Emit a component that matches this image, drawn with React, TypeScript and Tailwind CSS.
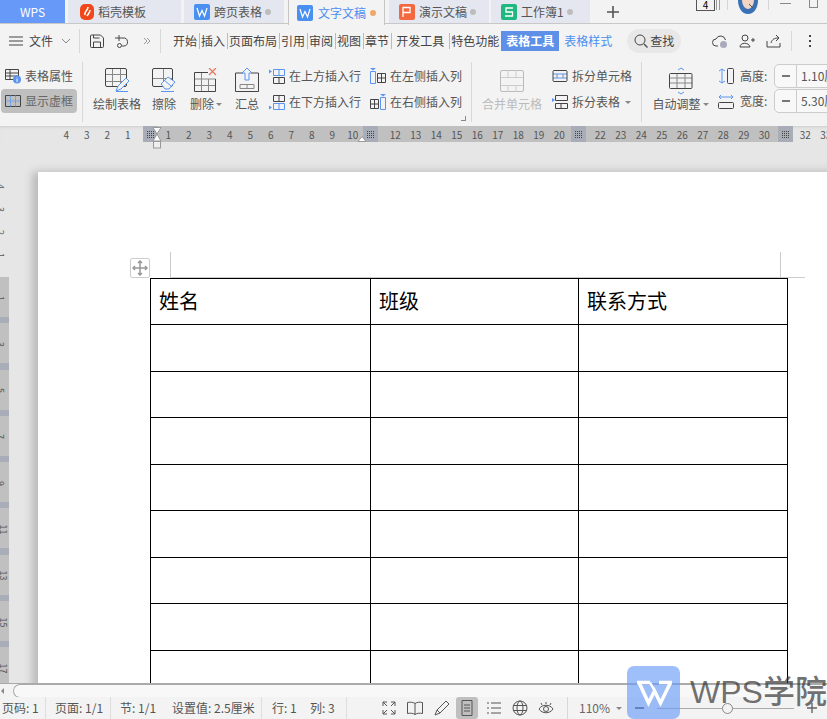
import React from "react";

const S = ({ w, h, children, className = "" }: { w: number; h: number; children: React.ReactNode; className?: string }) => (
  <svg width={w} height={h} viewBox={`0 0 ${w} ${h}`} fill="none" className={`flex-none ${className}`}>
    {children}
  </svg>
);
const D = "#444";
const L = "#888";
const B = "#5b95f0";

const TabIcon = ({ c, kind }: { c: string; kind: string }) => (
  <S w={kind === "F" ? 14 : 16} h={16}>
    <rect width={kind === "F" ? 14 : 16} height="16" rx={kind === "F" ? 5 : 2} fill={c} />
    {kind === "W" && <path d="M3 4 L5.5 12 L8 6.5 L10.5 12 L13 4" stroke="#fff" strokeWidth="1.2" />}
    {kind === "P" && <path d="M4 13V3.5h7v5H4" stroke="#fff" strokeWidth="1.3" />}
    {kind === "S" && <path d="M12 4H5v4h6.5v4H4" stroke="#fff" strokeWidth="1.3" />}
    {kind === "F" && <path d="M8 3c0 4-4 4-3 8M10 6c0 3-2 4-3 6" stroke="#fff" strokeWidth="1.5" />}
  </S>
);

const Tab = ({ w, icon, label, dot, active, ml, pl = "pl-[10px]" }: { w: string; icon: React.ReactNode; label: string; dot?: string; active?: boolean; ml: string; pl?: string }) => (
  <div
    className={`${w} ${ml} ${pl} flex flex-none items-center text-[12px] ${
      active ? "relative z-10 h-[25px] gap-[5px] border-x border-[#c6c6c6] bg-[#f3f3f3] text-[#4a8ef0]" : "h-[23px] gap-[4px] bg-[#e4e7ef] text-[#555]"
    }`}
  >
    {icon}
    <span className="whitespace-nowrap">{label}</span>
    {dot && <span className="ml-[-1px] h-[6px] w-[6px] rounded-full" style={{ background: dot }} />}
  </div>
);

const TabBar = () => (
  <div className="flex h-[24px] flex-none border-b border-[#c8c8c8] bg-[#f3f3f3]">
    <div className="flex h-full w-[65px] flex-none items-center justify-center bg-[#6699f8] text-[12px] text-white">WPS</div>
    <Tab ml="ml-[3px]" pl="pl-[12px]" w="w-[113px]" icon={<TabIcon c="#f0481a" kind="F" />} label="稻壳模板" />
    <Tab ml="ml-[3px]" w="w-[100px]" icon={<TabIcon c="#4a90f0" kind="W" />} label="跨页表格" dot="#bdbdbd" />
    <Tab ml="ml-[4px]" pl="pl-[8px]" w="w-[97px]" icon={<TabIcon c="#4a90f0" kind="W" />} label="文字文稿" dot="#efa868" active />
    <Tab ml="ml-[4px]" w="w-[100px]" icon={<TabIcon c="#f4683f" kind="P" />} label="演示文稿" dot="#bdbdbd" />
    <Tab ml="ml-[2px]" w="w-[99px]" icon={<TabIcon c="#20b880" kind="S" />} label="工作簿1" dot="#bdbdbd" />
    <div className="ml-[16px] flex-none">
      <S w={14} h={23}>
        <path d="M7 6v12M1 12h12" stroke="#555" strokeWidth="1.6" />
      </S>
    </div>
    <div className="ml-[76px] flex h-[11px] w-[19px] flex-none items-end justify-center border border-t-0 border-[#555] text-[10px] leading-none text-black">4</div>
    <div className="ml-[1px] h-[10px] w-[4px] flex-none border-x border-[#999]" />
    <div className="ml-[7px] h-[10px] w-px flex-none bg-[#d5d5d5]" />
    <div className="ml-[10px] h-[14px] w-[20px] flex-none">
      <S w={20} h={14}>
        <path d="M0 0h20c0 8-4 14-10 14S0 8 0 0z" fill="#3a70b5" />
        <path d="M4 0h12c0 5-3 9-6 9S4 5 4 0z" fill="#f0d5c5" />
        <path d="M11 4l4 4" stroke="#555" />
      </S>
    </div>
    <div className="ml-[10px] h-[10px] w-px flex-none bg-[#d5d5d5]" />
    <div className="ml-[11px] mt-[3px] h-px w-[11px] flex-none bg-[#888]" />
    <div className="ml-[18px] h-[8px] w-[9px] flex-none border border-t-0 border-[#888]" />
  </div>
);

const Sep = ({ className = "" }: { className?: string }) => <div className={`w-px flex-none bg-[#d8d8d8] ${className}`} />;

const MenuItem = ({ t }: { t: string }) => <span className="flex-none whitespace-nowrap text-[12px] text-[#444]">{t}</span>;
const MenuLine = ({ className }: { className: string }) => <div className={`h-[16px] w-px flex-none bg-[#bbb] ${className}`} />;

const MenuBar = () => (
  <div className="flex h-[34px] flex-none items-center bg-[#f3f3f3]">
    <S w={14} h={12} className="ml-[9px]">
      <path d="M0 2h14M0 6h14M0 10h14" stroke={D} />
    </S>
    <span className="ml-[6px] flex-none text-[12px] text-[#444]">文件</span>
    <S w={10} h={6} className="ml-[8px]">
      <path d="M1 1l4 4 4-4" stroke="#888" />
    </S>
    <Sep className="ml-[8px] h-[24px]" />
    <S w={14} h={14} className="ml-[10px]">
      <path d="M1.5 1h9l3 3v8.5a1 1 0 0 1-1 1h-11a1 1 0 0 1-1-1V2a1 1 0 0 1 1-1zM3.5 13.5V8h7v5.5M3.5 1v3h6" stroke={D} />
    </S>
    <S w={14} h={14} className="ml-[11px]">
      <path d="M0 4h8a4 4 0 0 1 1 8H7M4 1v6" stroke={D} />
      <circle cx="4.5" cy="11.5" r="2" stroke={D} />
    </S>
    <S w={8} h={8} className="ml-[14px]">
      <path d="M1 1l3 3-3 3M4 1l3 3-3 3" stroke="#999" />
    </S>
    <Sep className="ml-[9px] h-[24px]" />
    <div className="ml-[12px] flex flex-none items-center">
      <MenuItem t="开始" />
      <MenuLine className="ml-[2px] mr-[1px]" />
      <MenuItem t="插入" />
      <MenuLine className="ml-[2px] mr-[1px]" />
      <MenuItem t="页面布局" />
      <MenuLine className="ml-[2px] mr-[1px]" />
      <MenuItem t="引用" />
      <MenuLine className="ml-[2px] mr-[1px]" />
      <MenuItem t="审阅" />
      <MenuLine className="ml-[2px] mr-[1px]" />
      <MenuItem t="视图" />
      <MenuLine className="ml-[2px] mr-[1px]" />
      <MenuItem t="章节" />
      <MenuLine className="ml-[2px] mr-[4px]" />
      <MenuItem t="开发工具" />
      <MenuLine className="ml-[5px] mr-[1px]" />
      <MenuItem t="特色功能" />
    </div>
    <div className="ml-[2px] flex h-[20px] w-[58px] flex-none items-center justify-center bg-[#5e90e8] text-[12px] font-bold text-white">表格工具</div>
    <span className="ml-[5px] flex-none text-[12px] text-[#4a8ef0]">表格样式</span>
    <div className="ml-[15px] flex h-[24px] w-[54px] flex-none items-center justify-center gap-[2px] rounded-full bg-[#e8e8e8] text-[12px] text-[#444]">
      <S w={14} h={14}>
        <circle cx="6" cy="6" r="5" stroke={D} />
        <path d="M10 10l3.5 3.5" stroke={D} strokeWidth="1.3" />
      </S>
      查找
    </div>
    <S w={16} h={14} className="ml-[31px]">
      <path d="M6 12H4a3.5 3.5 0 0 1 0-7 5 5 0 0 1 9.5 1" stroke={D} />
      <circle cx="11.5" cy="10.5" r="3.5" fill="#aab" />
    </S>
    <S w={16} h={14} className="ml-[11px]">
      <circle cx="6" cy="4" r="3" stroke={D} />
      <path d="M1 13c0-5 9-5 10 0zM12 6h4M14 4v4" stroke={D} />
    </S>
    <S w={16} h={14} className="ml-[11px]">
      <path d="M1 7v6h13V9M5 9c1-4 4-5 7-5M10 1l3 3-3 3" stroke={D} />
    </S>
    <Sep className="ml-[9px] h-[20px]" />
    <div className="ml-[17px] flex flex-none flex-col gap-[3px]">
      <div className="h-[2px] w-[2px] bg-[#444]" />
      <div className="h-[2px] w-[2px] bg-[#444]" />
      <div className="h-[2px] w-[2px] bg-[#444]" />
    </div>
  </div>
);

const Grid = ({ w = 22, h = 20, v = [0.5], hz = [0.5], c = D, inner = L }: { w?: number; h?: number; v?: number[]; hz?: number[]; c?: string; inner?: string }) => (
  <g>
    {v.map((f) => (
      <path key={f} stroke={inner} d={`M${Math.round(w * f) + 0.5} 0v${h}`} />
    ))}
    {hz.map((f) => (
      <path key={f} stroke={inner} d={`M0 ${Math.round(h * f) + 0.5}h${w}`} />
    ))}
    <rect x=".5" y=".5" width={w - 1} height={h - 1} rx="1.5" stroke={c} />
  </g>
);

const Big = ({ icon, label, ml, w, caret, muted }: { icon: React.ReactNode; label: string; ml: string; w: string; caret?: boolean; muted?: boolean }) => (
  <div className={`${ml} ${w} flex flex-none flex-col items-center`}>
    <div className="flex h-[34px] items-end">{icon}</div>
    <div className={`mt-[3px] flex items-center whitespace-nowrap text-[12px] leading-[18px] ${muted ? "text-[#bbb]" : "text-[#555]"}`}>
      {label}
      {caret && <span className="ml-[2px] mt-[1px] h-0 w-0 border-x-[3px] border-t-[3px] border-x-transparent border-t-[#888]" />}
    </div>
  </div>
);

const Mini = ({ icon, label, caret }: { icon: React.ReactNode; label: string; caret?: boolean }) => (
  <div className="flex h-[26px] items-center gap-[4px] whitespace-nowrap text-[12px] text-[#555]">
    {icon}
    {label}
    {caret && <span className="ml-[1px] mt-[1px] h-0 w-0 border-x-[3px] border-t-[3px] border-x-transparent border-t-[#888]" />}
  </div>
);

const RowIns = ({ below }: { below?: boolean }) => (
  <S w={16} h={15}>
    <path d={below ? "M0 10.5l3 2-3 2z" : "M0 .5l3 2-3 2z"} fill={B} />
    <path d="M4.5 .5h11v6h-11zM10 .5v6" stroke={below ? D : B} />
    <path d="M4.5 8.5h11v6h-11zM10 8.5v6" stroke={below ? B : D} />
  </S>
);
const ColIns = ({ right }: { right?: boolean }) => (
  <S w={16} h={16}>
    <path d={right ? "M10 0h6l-3 2.5z" : "M0 0h6L3 2.5z"} fill={B} />
    <path d={right ? "M10.5 3.5h5v12h-5z" : "M.5 3.5h5v12h-5z"} stroke={B} />
    <path d={right ? "M.5 5.5h8v9h-8zM4.5 5.5v9M.5 10h8" : "M7.5 5.5h8v9h-8zM11.5 5.5v9M7.5 10h8"} stroke={D} />
  </S>
);

const Stepper = ({ v }: { v: string }) => (
  <div className="ml-[1px] flex h-[24px] w-[60px] flex-none overflow-hidden rounded-l-[5px] border border-[#ccc] bg-[#f8f8f8] text-[12px] text-[#555]">
    <div className="flex w-[22px] flex-none items-center justify-center border-r border-[#ccc]">
      <div className="h-[2px] w-[8px] bg-[#777]" />
    </div>
    <span className="ml-[4px] whitespace-nowrap leading-[22px]">{v}</span>
  </div>
);

const Ribbon = () => (
  <div className="flex h-[68px] flex-none overflow-hidden bg-[#f3f3f3]">
    <div className="flex w-[82px] flex-none flex-col pl-[1px] pt-[5px]">
      <div className="flex h-[26px] items-center gap-[4px] pl-[4px] text-[12px] text-[#555]">
        <S w={16} h={16}>
          <path d="M.5 1.5h13v10H.5zM.5 5h13M5 1.5v10M.5 8h13" stroke={D} />
          <circle cx="12" cy="11.5" r="4" fill={B} />
          <path d="M12 9.5v.8M12 11v3" stroke="#fff" />
        </S>
        表格属性
      </div>
      <div className="flex h-[24px] w-[76px] items-center gap-[4px] rounded-[4px] bg-[#bfbfbf] pl-[4px] text-[12px] text-[#666]">
        <S w={16} h={14}>
          <path d="M.5 1.5h15v11H.5z" stroke={D} />
          <path d="M.5 7h15M5.5 1.5v11M10.5 1.5v11" stroke={B} strokeDasharray="2 1" />
        </S>
        显示虚框
      </div>
    </div>
    <Sep className="my-[4px]" />
    <Big
      ml="ml-[10px]"
      w="w-[48px]"
      label="绘制表格"
      icon={
        <S w={24} h={24}>
          <Grid w={22} h={19} v={[0.33, 0.66]} hz={[0.33, 0.66]} />
          <path d="M11 23l2-5 8-8 3 3-8 8z" fill="#f3f3f3" stroke={B} />
          <path d="M11 23.5h12" stroke={B} />
        </S>
      }
    />
    <Big
      ml="ml-[11px]"
      w="w-[24px]"
      label="擦除"
      icon={
        <S w={24} h={24}>
          <Grid w={21} h={19} />
          <path d="M9 16l7-7 7 5-6 7h-4z" fill="#f3f3f3" stroke={B} />
          <path d="M12 12l7 6M9 23.5h13" stroke={B} />
        </S>
      }
    />
    <Big
      ml="ml-[14px]"
      w="w-[32px]"
      caret
      label="删除"
      icon={
        <S w={24} h={24}>
          <path d="M7.5 4.5v19M14.5 11v12.5M.5 11h21M.5 17.5h21" stroke={L} />
          <path d="M14 4.5H.5v19h21V11" stroke={D} />
          <path d="M15 0l7 7M22 0l-7 7" stroke="#e8705a" strokeWidth="1.2" />
        </S>
      }
    />
    <Big
      ml="ml-[13px]"
      w="w-[24px]"
      label="汇总"
      icon={
        <S w={24} h={24}>
          <path d="M8 5H.5v18.5h23V5H16" stroke={D} />
          <path d="M12 0l5 5h-3v7h-4V5H7z" stroke={B} fill="#f3f3f3" />
          <path d="M5 16.5h14v4H5zM12 16.5v4" stroke={L} />
        </S>
      }
    />
    <div className="ml-[10px] flex w-[92px] flex-none flex-col pt-[5px]">
      <Mini icon={<RowIns />} label="在上方插入行" />
      <Mini icon={<RowIns below />} label="在下方插入行" />
    </div>
    <div className="ml-[9px] flex w-[92px] flex-none flex-col pt-[5px]">
      <Mini icon={<ColIns />} label="在左侧插入列" />
      <Mini icon={<ColIns right />} label="在右侧插入列" />
    </div>
    <div className="relative my-[4px] ml-[9px] flex-none">
      <Sep className="h-full" />
      <div className="absolute -left-[10px] bottom-[1px] h-[5px] w-[5px] border-b border-r border-[#888]" />
    </div>
    <Big
      ml="ml-[10px]"
      w="w-[60px]"
      muted
      label="合并单元格"
      icon={
        <S w={24} h={22}>
          <Grid w={24} h={22} v={[]} hz={[0.33, 0.66]} c="#bbb" inner="#ccc" />
          <path d="M8 0v7M16 0v7M8 15v7M16 15v7" stroke="#ccc" />
        </S>
      }
    />
    <div className="ml-[10px] flex w-[89px] flex-none flex-col pt-[5px]">
      <Mini
        icon={
          <S w={16} h={14}>
            <path d="M5 5v4M11 5v4" stroke={L} />
            <path d="M1 5h14M1 9h14" stroke={B} />
            <rect x="1" y="1.5" width="14" height="11" rx="1" stroke={D} />
          </S>
        }
        label="拆分单元格"
      />
      <Mini
        icon={
          <S w={16} h={16}>
            <path d="M0 4l3 2-3 2z" fill={B} />
            <path d="M3.5 1.5h12v5h-12zM3.5 9.5h12v5h-12zM9 9.5v5" stroke={D} />
          </S>
        }
        label="拆分表格"
        caret
      />
    </div>
    <Sep className="my-[4px]" />
    <Big
      ml="ml-[10px]"
      w="w-[57px]"
      caret
      label="自动调整"
      icon={
        <S w={24} h={28} className="translate-y-[3px]">
          <path d="M9 3l3-2 3 2M9 25l3 2 3-2" stroke={B} />
          <path d="M8 6.5v15M16 6.5v15M.5 11h22.5M.5 16h22.5" stroke={L} />
          <rect x=".5" y="6.5" width="22.5" height="15" rx="1" stroke={D} />
        </S>
      }
    />
    <div className="ml-[9px] flex flex-none flex-col pt-[5px]">
      <div className="flex h-[25px] items-center text-[12px] text-[#555]">
        <S w={16} h={16}>
          <path d="M4 1v14M1 3l3-2 3 2M1 13l3 2 3-2" stroke={B} />
          <rect x="9.5" y=".5" width="6" height="15" rx="1" stroke={D} />
        </S>
        <span className="ml-[6px] w-[33px] whitespace-nowrap">高度:</span>
        <Stepper v="1.10厘米" />
      </div>
      <div className="flex h-[25px] items-center text-[12px] text-[#555]">
        <S w={16} h={16}>
          <path d="M1 4h14M3 2L1 4l2 2M13 2l2 2-2 2" stroke={B} />
          <rect x=".5" y="9.5" width="15" height="6" rx="1" stroke={D} />
        </S>
        <span className="ml-[6px] w-[33px] whitespace-nowrap">宽度:</span>
        <Stepper v="5.30厘米" />
      </div>
    </div>
  </div>
);

const dots = [0, 2, 4, 6];
const Block = () => (
  <div className="grid h-full w-[15px] flex-none place-items-center bg-[#a9adb8]">
    <svg width="7" height="7">
      {dots.map((y) => dots.map((x) => <rect key={`${x}-${y}`} x={x} y={y} width="1" height="1" fill="#444" />))}
    </svg>
  </div>
);
const Nums = ({ list, className = "" }: { list: string[]; className?: string }) => (
  <div className={`flex h-full flex-none items-center text-[10px] text-[#555] ${className}`}>
    {list.map((n) => (
      <span key={n} className="w-[20.5px] flex-none text-center">
        {n}
      </span>
    ))}
  </div>
);

const HRuler = () => (
  <div className="relative flex h-[16px] flex-none overflow-visible bg-[#e6e6e6] shadow-[inset_0_3px_3px_-2px_#ccc]">
    <Nums list={["4", "3", "2", "1"]} className="ml-[56px] w-[87px]" />
    <Block />
    <Nums list={["1", "2", "3", "4", "5", "6", "7", "8", "9", "10"]} className="w-[205px] bg-[#c0c0c0]" />
    <Block />
    <Nums list={["12", "13", "14", "15", "16", "17", "18", "19", "20"]} className="w-[193px] bg-[#c0c0c0] pl-[7px]" />
    <Block />
    <Nums list={["22", "23", "24", "25", "26", "27", "28", "29", "30"]} className="w-[192px] bg-[#c0c0c0] pl-[4px]" />
    <Block />
    <Nums list={["32", "33"]} className="pl-[2px]" />
    <svg className="absolute left-[152px] top-[1px] z-10" width="10" height="22" fill="none">
      <path d="M1 .5h8L5 7l4 7H1l4-7z" fill="#fff" stroke="#999" />
      <rect x="1.5" y="14.5" width="7" height="6.5" fill="#eee" stroke="#999" />
    </svg>
    <svg className="absolute left-[357px] top-[9px] z-10" width="10" height="7" fill="none">
      <path d="M1 6.5l4-5 4 5z" fill="#fff" stroke="#999" />
    </svg>
  </div>
);

const VRuler = () => {
  const top = ["4", "3", "2", "1"];
  const rows = ["1", "3", "5", "7", "9", "11", "13", "15", "17"];
  return (
    <div className="flex w-[9px] flex-none flex-col overflow-hidden text-[9px] leading-none text-[#555]">
      <div className="flex h-[135px] flex-none flex-col pt-[33px]">
        {top.map((n) => (
          <div key={n} className="flex h-[23px] flex-none items-center">
            <span className="-ml-[2px] rotate-90">{n}</span>
          </div>
        ))}
      </div>
      <div className="flex flex-1 flex-col bg-[#c0c0c0]">
        {rows.map((n) => (
          <div key={n} className="flex h-[46.3px] flex-none flex-col">
            <div className="flex h-[40px] flex-none items-center pt-[2px]">
              <span className="-ml-[2px] rotate-90">{n}</span>
            </div>
            <div className="h-[6.3px] flex-none bg-[#a9adb8]" />
          </div>
        ))}
      </div>
    </div>
  );
};

const Cell = ({ t }: { t?: string }) => (
  <td className="border border-black pb-[2px] pl-[8px] align-middle text-[20px] leading-none text-black">{t}</td>
);

const DocTable = () => (
  <table className="w-[637px] table-fixed border-collapse">
    <colgroup>
      <col className="w-[220px]" />
      <col className="w-[208px]" />
      <col className="w-[209px]" />
    </colgroup>
    <tbody>
      {[0, 1, 2, 3, 4, 5, 6, 7, 8].map((r) => (
        <tr key={r} className={r % 2 === 0 ? "h-[46px]" : "h-[47px]"}>
          <Cell t={r === 0 ? "姓名" : undefined} />
          <Cell t={r === 0 ? "班级" : undefined} />
          <Cell t={r === 0 ? "联系方式" : undefined} />
        </tr>
      ))}
    </tbody>
  </table>
);

const Document = () => (
  <div className="flex min-h-0 flex-1 overflow-hidden bg-[#e6e6e6]">
    <VRuler />
    <div className="ml-[29px] mt-[30px] w-[860px] flex-none self-start bg-white pl-[112px] pt-[106px] shadow-[-6px_0_8px_0_#bbb,0_-4px_8px_-2px_#ddd]">
      <div className="relative">
        <div className="absolute -top-[26px] left-[20px] h-[26px] w-px bg-[#ccc]" />
        <div className="absolute -top-[26px] left-[630px] h-[26px] w-px bg-[#ccc]" />
        <div className="absolute -top-px left-[20px] h-px w-[635px] bg-[#ccc]" />
        <div className="absolute -left-[20px] -top-[20px] grid h-[20px] w-[20px] place-items-center rounded-[2px] border border-[#ccc] bg-white">
          <svg width="16" height="16" fill="none" stroke="#999" strokeWidth="1.5">
            <path d="M8 1v14M1 8h14M6 3l2-2 2 2M6 13l2 2 2-2M3 6L1 8l2 2M13 6l2 2-2 2" />
          </svg>
        </div>
        <DocTable />
      </div>
    </div>
  </div>
);

const ScrollBar = () => (
  <div className="flex h-[14px] flex-none items-center border-t border-[#aaa] bg-[#f3f3f3]">
    <span className="ml-[1px] h-0 w-0 border-y-[3px] border-r-[3px] border-y-transparent border-r-[#888]" />
    <div className="ml-[9px] h-[14px] flex-1 rounded-l-[7px] border border-r-0 border-[#aaa] bg-[#f8f8f8]" />
  </div>
);

const Stat = ({ t, w, sep }: { t: string; w: string; sep?: boolean }) => (
  <div className={`${w} flex h-[22px] flex-none items-center whitespace-nowrap ${sep ? "border-r border-[#ddd]" : ""}`}>{t}</div>
);

const ico = "#555";
const StatusBar = () => (
  <div className="flex h-[22px] flex-none items-center bg-[#f3f3f3] text-[12px] text-[#555]">
    <Stat t="页码: 1" w="w-[46px] pl-[2px]" sep />
    <Stat t="页面: 1/1" w="w-[65px] pl-[9px]" sep />
    <Stat t="节: 1/1" w="w-[61px] pl-[9px]" />
    <Stat t="设置值: 2.5厘米" w="w-[90px]" sep />
    <Stat t="行: 1" w="w-[48px] pl-[10px]" />
    <Stat t="列: 3" w="w-[37px]" sep />
    <S w={14} h={14} className="ml-[35px]">
      <path d="M1 5V1h4M13 5V1H9M1 9v4h4M13 9v4H9M1 1l4 4M13 1L9 5M1 13l4-4M13 13L9 9" stroke={ico} />
    </S>
    <S w={16} h={14} className="ml-[11px]">
      <path d="M8 2.5C6 1 3 1 .5 1.5v11c2.5-.5 5.5-.5 7.5 1 2-1.5 5-1.5 7.5-1v-11C13 1 10 1 8 2.5zM8 2.5v11" stroke={ico} />
    </S>
    <S w={16} h={16} className="ml-[11px]">
      <path d="M1 15l2-5L12 1l3 3-9 9zM3 10l3 3" stroke={ico} />
    </S>
    <div className="ml-[6px] flex h-[22px] w-[22px] flex-none items-center justify-center rounded-[3px] bg-[#bfbfbf]">
      <S w={12} h={16}>
        <path d="M1 .5h10v15H1zM3 5h6M3 8h6M3 11h6" stroke={ico} />
      </S>
    </div>
    <S w={14} h={14} className="ml-[9px]">
      <path d="M4 2h10M4 7h10M4 12h10M0 2h2M0 7h2M0 12h2" stroke={ico} />
    </S>
    <S w={16} h={16} className="ml-[11px]">
      <circle cx="8" cy="8" r="7" stroke={ico} />
      <ellipse cx="8" cy="8" rx="3" ry="7" stroke={ico} />
      <path d="M1 5.5h14M1 10.5h14" stroke={ico} />
    </S>
    <S w={16} h={14} className="ml-[10px]">
      <path d="M1 8c3-5 11-5 14 0-3 5-11 5-14 0z" stroke={ico} />
      <circle cx="8" cy="8" r="2.5" stroke={ico} />
      <path d="M8 1v2M3 2l1 2M13 2l-1 2" stroke={ico} />
    </S>
    <Sep className="ml-[13px] h-[22px]" />
    <span className="ml-[11px] flex-none text-[#666]">110%</span>
    <span className="ml-[6px] mt-[1px] h-0 w-0 flex-none border-x-[3px] border-t-[3px] border-x-transparent border-t-[#888]" />
    <div className="ml-[13px] h-[2px] w-[9px] flex-none bg-[#555]" />
    <div className="relative ml-[13px] h-px w-[137px] flex-none bg-[#aaa]">
      <div className="absolute -top-[5px] left-[65px] h-[11px] w-[11px] rounded-full border border-[#888] bg-[#f3f3f3]" />
    </div>
    <S w={10} h={10} className="ml-[13px]">
      <path d="M5 0v10M0 5h10" stroke="#666" strokeWidth="1.4" />
    </S>
  </div>
);

const Watermark = () => (
  <div className="absolute bottom-0 left-[627px] z-20 flex items-center">
    <div className="grid h-[53px] w-[53px] flex-none place-items-center rounded-[7px] bg-[#6a9cf7]/65">
      <svg width="38" height="28" viewBox="0 0 38 28" fill="none" stroke="#fff" strokeWidth="3.5">
        <path d="M2 3.5h13M24 3.5h13" />
        <path d="M4 3.5l9.5 20.5 6-12 6 12 10-20.500" />
        <path d="M15 3.5l5 9" strokeWidth="2.5" />
      </svg>
    </div>
    <span className="ml-[10px] -translate-y-px whitespace-nowrap font-['Liberation_Sans','Noto_Sans_CJK_SC',sans-serif] text-[32px] font-medium leading-none text-[#333]/70">
      WPS学院
    </span>
  </div>
);

export default function App() {
  return (
    <div className="relative flex h-[719px] w-[827px] flex-col overflow-hidden bg-[#e6e6e6] font-['Noto_Sans_CJK_SC','Liberation_Sans',sans-serif]">
      <TabBar />
      <MenuBar />
      <Ribbon />
      <HRuler />
      <Document />
      <ScrollBar />
      <StatusBar />
      <Watermark />
    </div>
  );
}
